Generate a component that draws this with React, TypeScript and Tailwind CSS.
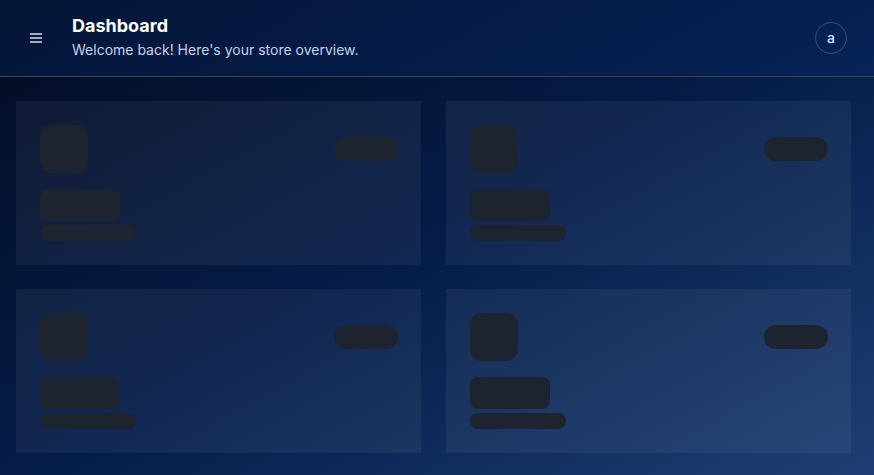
export default function App() {
  const cards = [0, 1, 2, 3];
  return (
    <div
      className="min-h-screen bg-linear-to-br from-[#030c22] via-[#051c48] to-[#1f3f74] text-white"
      style={{ fontFamily: "Inter, 'Noto Sans', sans-serif" }}
    >
      <header className="flex h-[77px] items-center border-b border-[#3a4454] bg-[#0b2a6a]/30 pl-6 pr-[27px]">
        <button className="p-1.5 text-[#a3adbd]">
          <svg width="12" height="12" viewBox="0 0 12 12" className="block">
            <rect x="0" y="1" width="12" height="2" fill="currentColor" />
            <rect x="0" y="5" width="12" height="2" fill="currentColor" />
            <rect x="0" y="9" width="12" height="2" fill="currentColor" />
          </svg>
        </button>
        <div className="mb-1 ml-6 flex-1">
          <h1 className="text-lg font-bold leading-7 text-white">Dashboard</h1>
          <p className="text-sm leading-5 text-[#c6d3ee]">Welcome back! Here's your store overview.</p>
        </div>
        <div className="flex h-8 w-8 items-center justify-center rounded-full border border-white/20 text-sm font-medium text-[#cfe6ff]">
          a
        </div>
      </header>
      <main className="grid grid-cols-2 gap-x-[25px] gap-y-6 pb-6 pl-4 pr-[23px] pt-6">
        {cards.map((i) => (
          <div key={i} className="bg-white/5 py-6 pl-6 pr-[23px]">
            <div className="flex items-center justify-between">
              <div className="h-12 w-12 rounded-xl bg-[#1e2330]" />
              <div className="h-6 w-16 rounded-full bg-[#1e2330]" />
            </div>
            <div className="mt-4 h-8 w-20 rounded-lg bg-[#1e2330]" />
            <div className="mt-1 h-4 w-24 rounded-full bg-[#1e2330]" />
          </div>
        ))}
      </main>
    </div>
  );
}
